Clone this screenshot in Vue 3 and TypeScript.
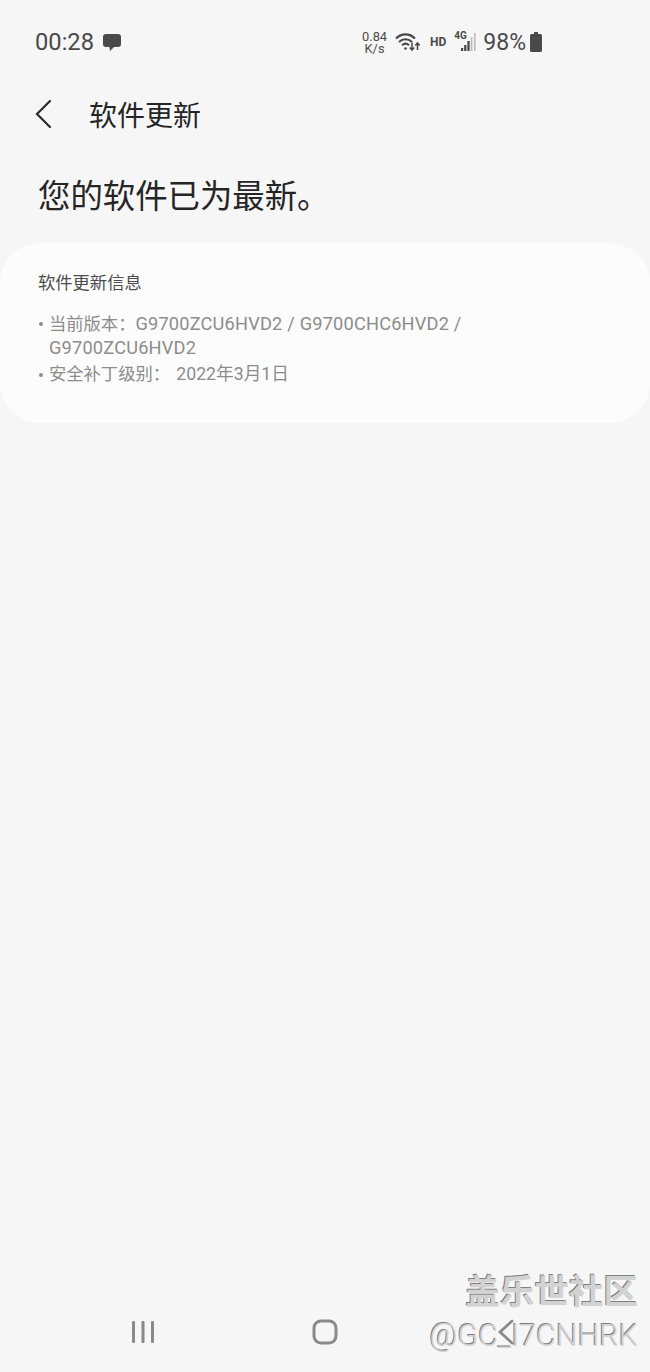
<script setup lang="ts">
const infoLines = [
  { id: 'version', label: '当前版本：', value: 'G9700ZCU6HVD2 / G9700CHC6HVD2 / G9700ZCU6HVD2', kind: 'wide' },
  { id: 'patch', label: '安全补丁级别： ', value: '2022年3月1日', kind: 'date' }
]
</script>

<template>
  <div class="page">
    <header class="status-bar">
      <div class="status-left">
        <span class="clock">00:28</span>
        <svg class="chat" width="20" height="19" viewBox="0 0 20 19">
          <path d="M4 1h12a3 3 0 0 1 3 3v7a3 3 0 0 1-3 3h-4l-4 4-.6-4H4a3 3 0 0 1-3-3V4a3 3 0 0 1 3-3z" fill="#4a4a4a" />
        </svg>
      </div>
      <div class="status-right">
        <div class="speed"><span>0.84</span><span>K/s</span></div>
        <svg class="wifi" width="26" height="20" viewBox="0 0 26 20" fill="none" stroke="#484848" stroke-width="2.200">
          <path d="M1 6.500C6.500 1 14.500 1 20 6.500" />
          <path d="M4 10c3.800-3.700 9.200-3.700 13 0" />
          <path d="M7 13.300c2.200-2 4.800-2 7 0" />
          <circle cx="10.500" cy="16.500" r="1.300" fill="#484848" stroke="none" />
          <path d="M17 10.500v7M14.800 15.500l2.200 2.500 2.200-2.500" stroke-width="1.500" />
          <path d="M22.500 18v-7M20.300 13.500l2.200-2.500 2.200 2.500" stroke-width="1.500" />
        </svg>
        <span class="hd">HD</span>
        <div class="signal">
          <span class="lte">4G</span>
          <svg width="15" height="20" viewBox="0 0 15 20">
            <rect x="0" y="16" width="2.200" height="3" fill="#444" />
            <rect x="3.200" y="13" width="2.200" height="6" fill="#444" />
            <rect x="6.400" y="9" width="2.200" height="10" fill="#444" />
            <rect x="9.800" y="5" width="1.600" height="14" fill="#bbb" />
            <rect x="13" y="1" width="1.600" height="18" fill="#bbb" />
          </svg>
        </div>
        <span class="battery-text">98%</span>
        <svg class="battery" width="14" height="20" viewBox="0 0 14 20">
          <path d="M5 0h4v2h2.500A1.500 1.500 0 0 1 13 3.500v15a1.500 1.500 0 0 1-1.500 1.500h-9A1.500 1.500 0 0 1 1 18.500v-15A1.500 1.500 0 0 1 2.500 2H5z" fill="#4a4a4a" />
        </svg>
      </div>
    </header>

    <nav class="title-bar">
      <svg class="back" width="18" height="30" viewBox="0 0 18 30" fill="none" stroke="#2a2a2a" stroke-width="2.200" stroke-linecap="round">
        <path d="M16 2 3 15l13 13" />
      </svg>
      <h1 class="title">软件更新</h1>
    </nav>

    <h2 class="headline">您的软件已为最新。</h2>

    <section class="card">
      <h3 class="card-title">软件更新信息</h3>
      <ul class="info-list">
        <li v-for="line in infoLines" :key="line.id">
          {{ line.label }}<span :class="line.kind">{{ line.value }}</span>
        </li>
      </ul>
    </section>

    <div class="spacer"></div>

    <footer class="nav-bar">
      <svg width="26" height="26" viewBox="0 0 26 26" fill="#8a8a8a">
        <rect x="2" y="2" width="3" height="22" rx="1" />
        <rect x="11.500" y="2" width="3" height="22" rx="1" />
        <rect x="21" y="2" width="3" height="22" rx="1" />
      </svg>
      <svg width="26" height="26" viewBox="0 0 26 26" fill="none" stroke="#8a8a8a" stroke-width="3">
        <rect x="2" y="2" width="22" height="22" rx="7" />
      </svg>
      <svg width="26" height="26" viewBox="0 0 26 26" fill="none" stroke="#8a8a8a" stroke-width="2.800" stroke-linecap="round">
        <path d="M18 2 6 13l12 11" />
      </svg>
    </footer>

    <div class="watermark">
      <div class="wm-name">盖乐世社区</div>
      <div class="wm-user">@GC_I7CNHRK</div>
    </div>
  </div>
</template>

<style scoped>
.page {
  position: relative;
  display: flex;
  flex-direction: column;
  width: 650px;
  height: 1372px;
  overflow: hidden;
  background: #f6f6f6;
  font-family: Roboto, "Noto Sans CJK SC", sans-serif;
}

.status-bar {
  display: flex;
  justify-content: space-between;
  align-items: center;
  height: 30px;
  padding: 27px 107px 0 35px;
}

.status-left,
.status-right {
  display: flex;
  align-items: center;
}

.clock {
  font-size: 23.700px;
  color: #4a4a4a;
}

.chat {
  margin-left: 8px;
}

.speed {
  display: flex;
  flex-direction: column;
  align-items: center;
  padding-top: 2px;
  font-size: 12.800px;
  line-height: 12px;
  color: #4a4a4a;
}

.wifi {
  margin-left: 8px;
}

.hd {
  margin-left: 9px;
  font-size: 12px;
  font-weight: 700;
  color: #4a4a4a;
}

.signal {
  position: relative;
  display: flex;
  margin-left: 8px;
  padding-left: 7px;
}

.lte {
  position: absolute;
  left: 0;
  top: -2px;
  font-size: 10px;
  font-weight: 700;
  color: #4a4a4a;
}

.battery-text {
  margin-left: 7px;
  font-size: 23px;
  color: #4a4a4a;
}

.battery {
  margin-left: 3px;
}

.title-bar {
  display: flex;
  align-items: center;
  height: 40px;
  margin-top: 37px;
  padding-left: 34px;
}

.title {
  margin: 0 0 0 37px;
  font-size: 28px;
  font-weight: 400;
  color: #252525;
}

.headline {
  margin: 41px 0 0 38px;
  font-size: 32.400px;
  line-height: 44px;
  font-weight: 400;
  color: #252525;
}

.card {
  height: 180px;
  box-sizing: border-box;
  margin-top: 24px;
  padding: 28px 38px 0;
  border-radius: 40px;
  background: #fcfcfc;
}

.card-title {
  margin: 0;
  font-size: 17.300px;
  line-height: 24px;
  font-weight: 400;
  color: #4c4c4c;
}

.info-list {
  margin: 17px 0 0;
  padding: 0;
  width: 440px;
  list-style: none;
  font-size: 17.300px;
  line-height: 23px;
  color: #8c8c8c;
}

.info-list li {
  position: relative;
  padding-left: 11px;
  margin-bottom: 3px;
}

.info-list li::before {
  content: "";
  position: absolute;
  left: 1px;
  top: 10px;
  width: 4px;
  height: 4px;
  border-radius: 50%;
  background: #8c8c8c;
}

.wide {
  font-size: 18.200px;
  letter-spacing: 0.2px;
}

.date {
  margin-left: 2px;
  font-size: 17.700px;
}

.spacer {
  flex: 1;
}

.nav-bar {
  display: grid;
  grid-template-columns: repeat(3, 26px);
  justify-content: space-between;
  height: 26px;
  padding: 0 130px 27px;
}

.watermark {
  position: absolute;
  right: 12px;
  top: 1270px;
  text-align: right;
  color: #d2d2d2;
}

.wm-name {
  font-size: 34.500px;
  line-height: 44px;
  font-weight: 700;
  text-shadow: -1px -1px 0 #808080;
}

.wm-user {
  font-size: 30.500px;
  line-height: 44px;
  font-weight: 300;
  text-shadow: -1px -1px 0 #808080;
}
</style>
